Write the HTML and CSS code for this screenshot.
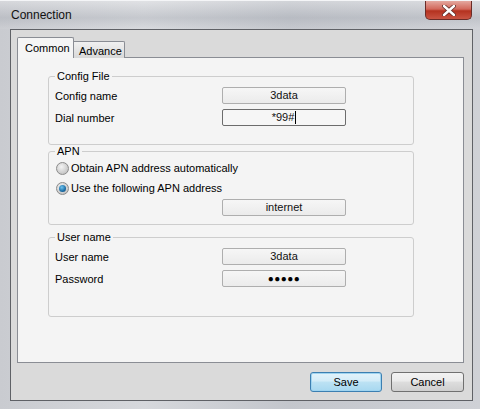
FILE: index.html
```html
<!DOCTYPE html>
<html>
<head>
<meta charset="utf-8">
<link rel="stylesheet" href="styles.css">
</head>
<body>
<div class="window">
  <div class="titlebar">
    <span class="title">Connection</span>
    <div class="close">
      <svg width="14" height="11" viewBox="0 0 14 11"><path d="M2 1 L12 10 M12 1 L2 10" stroke="#5a2a26" stroke-width="4" stroke-linecap="round"/><path d="M2 1 L12 10 M12 1 L2 10" stroke="#fff" stroke-width="2.4" stroke-linecap="round"/></svg>
    </div>
  </div>
  <div class="client">
    <div class="tabs">
      <div class="tab active">Common</div>
      <div class="tab">Advance</div>
    </div>
    <div class="panel">
      <fieldset class="group g1">
        <legend>Config File</legend>
        <div class="row"><span class="label">Config name</span><div class="field">3data</div></div>
        <div class="row"><span class="label">Dial number</span><div class="field focus">*99#<span class="caret"></span></div></div>
      </fieldset>
      <fieldset class="group g2">
        <legend>APN</legend>
        <div class="radio-row"><span class="radio"></span><span>Obtain APN address automatically</span></div>
        <div class="radio-row"><span class="radio checked"></span><span>Use the following APN address</span></div>
        <div class="row apn"><span class="label"></span><div class="field">internet</div></div>
      </fieldset>
      <fieldset class="group g3">
        <legend>User name</legend>
        <div class="row"><span class="label">User name</span><div class="field">3data</div></div>
        <div class="row"><span class="label">Password</span><div class="field pwd">●●●●●</div></div>
      </fieldset>
    </div>
    <div class="buttons">
      <button class="btn primary">Save</button>
      <button class="btn">Cancel</button>
    </div>
  </div>
</div>
</body>
</html>
```
FILE: styles.css
```css
html, body {
  margin: 0;
  padding: 0;
}
body {
  width: 480px;
  height: 409px;
  overflow: hidden;
  font-family: "Liberation Sans", Arial, sans-serif;
  font-size: 11px;
  color: #000;
}
.window {
  width: 480px;
  height: 409px;
  box-sizing: border-box;
  padding: 0 7px 8px 10px;
  display: flex;
  flex-direction: column;
  background: linear-gradient(90deg, #c9cbd0 0%, #d6d8dc 30%, #c3c6cc 60%, #cfd1d6 100%);
  border-top: 1px solid #f4f5f7;
  position: relative;
}
.titlebar {
  height: 28px;
  display: flex;
  align-items: center;
  background: linear-gradient(180deg, rgba(255,255,255,0.25), rgba(150,155,165,0.25) 60%, rgba(255,255,255,0.05));
  margin: 0 -7px 0 -10px;
  padding: 0 7px 0 11px;
}
.title {
  font-family: "Liberation Sans", Arial, sans-serif;
  font-size: 12px;
  color: #111;
}
.close {
  position: absolute;
  top: 0;
  left: 425px;
  width: 47px;
  height: 19px;
  box-sizing: border-box;
  border: 1px solid #6a2c27;
  border-top: none;
  border-radius: 0 0 5px 5px;
  background: linear-gradient(180deg, #e4a89f 0%, #d2685b 45%, #b4321f 55%, #c95443 100%);
  display: flex;
  align-items: center;
  justify-content: center;
}
.client {
  flex: 1;
  border: 1px solid #5f6166;
  background: #dadada;
  padding: 7px 8px 0 6px;
  display: flex;
  flex-direction: column;
}
.tabs {
  display: flex;
  align-items: flex-end;
  height: 21px;
  position: relative;
  z-index: 1;
}
.tab {
  box-sizing: border-box;
  height: 17px;
  width: 51px;
  border: 1px solid #8a8d94;
  border-bottom: none;
  border-left: none;
  background: linear-gradient(180deg, #f0f0f0, #d8d8d8);
  padding: 3px 0 0 5px;
  border-radius: 0 2px 0 0;
}
.tab.active {
  height: 21px;
  width: 57px;
  border-left: 1px solid #8a8d94;
  background: #f5f5f5;
  padding: 4px 0 0 7px;
  border-radius: 2px 2px 0 0;
}
.panel {
  box-sizing: border-box;
  height: 306px;
  margin-top: -1px;
  border: 1px solid #8a8d94;
  background: #f4f4f4;
  padding: 12px 0 0 30px;
}
.group {
  box-sizing: border-box;
  width: 366px;
  margin: 0;
  border: 1px solid #cdcdcd;
  border-radius: 3px;
  padding: 5px 6px 18px 6px;
  min-width: 0;
}
.group legend {
  height: 12px;
  line-height: 12px;
  padding: 0 2px;
  margin-left: 0;
}
.g2 {
  padding: 1px 6px 8px 6px;
}
.g3 {
  margin-top: 6px;
  padding: 5px 6px 29px 6px;
}
.row {
  display: flex;
  align-items: center;
  height: 17px;
}
.row + .row {
  margin-top: 5px;
}
.row.apn {
  margin-top: 1px;
}
.label {
  width: 167px;
  flex: none;
}
.field {
  box-sizing: border-box;
  width: 124px;
  height: 17px;
  border: 1px solid #aeaeae;
  border-radius: 2px;
  background: linear-gradient(180deg, #f6f6f6, #ebebeb);
  text-align: center;
  line-height: 15px;
  color: #111;
}
.field.focus {
  border-color: #6c6c6c;
  background: #f6f6f6;
}
.caret {
  display: inline-block;
  width: 1px;
  height: 13px;
  background: #000;
  vertical-align: -3px;
  margin-left: 1px;
}
.field.pwd {
  font-size: 10px;
  letter-spacing: 0.5px;
  color: #000;
}
.radio-row {
  display: flex;
  align-items: center;
  height: 20px;
  padding-left: 1px;
}
.radio {
  box-sizing: border-box;
  width: 13px;
  height: 13px;
  border-radius: 50%;
  border: 1px solid #8b8b8b;
  background: radial-gradient(circle at 40% 35%, #f4f4f4, #c8c8c8 70%, #b5b5b5);
  margin-right: 2px;
  position: relative;
}
.radio.checked::after {
  content: "";
  position: absolute;
  left: 2px;
  top: 2px;
  width: 7px;
  height: 7px;
  border-radius: 50%;
  background: radial-gradient(circle at 40% 35%, #6fc3ee, #1c6ea6 60%, #0d3d6a);
}
.buttons {
  display: flex;
  justify-content: flex-end;
  gap: 9px;
  margin-top: 9px;
}
.btn {
  box-sizing: border-box;
  height: 20px;
  width: 73px;
  border: 1px solid #707070;
  border-radius: 3px;
  background: linear-gradient(180deg, #f2f2f2 0%, #ebebeb 45%, #dddddd 50%, #cfcfcf 100%);
  font-family: "Liberation Sans", Arial, sans-serif;
  font-size: 11px;
  color: #000;
  padding: 0;
  margin: 0;
}
.btn.primary {
  width: 72px;
  border-color: #3c7fb1;
  background: linear-gradient(180deg, #e3f3fb 0%, #d3ecf8 45%, #bde2f4 50%, #a7d8f0 100%);
  box-shadow: inset 0 0 0 1px #9fd4f0;
}
```
